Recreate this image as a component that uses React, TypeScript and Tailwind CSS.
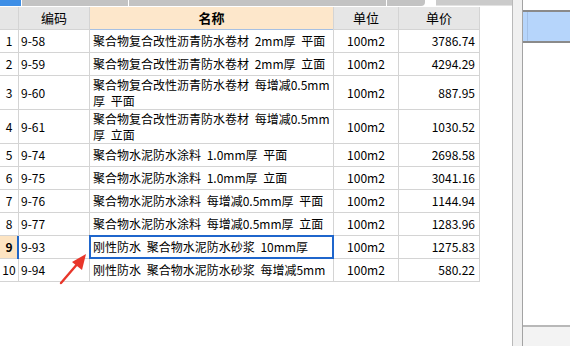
import React from "react"

type Row = { no: number; code: string; name: React.ReactNode; unit: string; price: string; tall?: boolean }

const rows: Row[] = [
  { no: 1, code: "9-58", name: "聚合物复合改性沥青防水卷材 2mm厚 平面", unit: "100m2", price: "3786.74" },
  { no: 2, code: "9-59", name: "聚合物复合改性沥青防水卷材 2mm厚 立面", unit: "100m2", price: "4294.29" },
  { no: 3, code: "9-60", name: <>聚合物复合改性沥青防水卷材 每增减0.5mm<br />厚 平面</>, unit: "100m2", price: "887.95", tall: true },
  { no: 4, code: "9-61", name: <>聚合物复合改性沥青防水卷材 每增减0.5mm<br />厚 立面</>, unit: "100m2", price: "1030.52", tall: true },
  { no: 5, code: "9-74", name: "聚合物水泥防水涂料 1.0mm厚 平面", unit: "100m2", price: "2698.58" },
  { no: 6, code: "9-75", name: "聚合物水泥防水涂料 1.0mm厚 立面", unit: "100m2", price: "3041.16" },
  { no: 7, code: "9-76", name: "聚合物水泥防水涂料 每增减0.5mm厚 平面", unit: "100m2", price: "1144.94" },
  { no: 8, code: "9-77", name: "聚合物水泥防水涂料 每增减0.5mm厚 立面", unit: "100m2", price: "1283.96" },
  { no: 9, code: "9-93", name: "刚性防水 聚合物水泥防水砂浆 10mm厚", unit: "100m2", price: "1275.83" },
  { no: 10, code: "9-94", name: "刚性防水 聚合物水泥防水砂浆 每增减5mm", unit: "100m2", price: "580.22" },
]

const cell = "relative border-r border-b border-[#d4d4d4] flex items-center"

export default function App() {
  return (
    <div className="w-[570px] h-[346px] flex bg-white overflow-hidden text-black text-[12px] leading-[16px] font-['Noto_Sans_CJK_SC','Noto_Sans',sans-serif]">
      {/* main grid panel */}
      <div className="relative w-[512px] flex flex-col">
        {/* tab strip */}
        <div className="h-[6px] flex gap-px bg-white">
          <div className="w-[21px] bg-[#3d8ee6]" />
          <div className="w-[106px] bg-[#c3c3c3]" />
          <div className="w-[257px] bg-[#c3c3c3]" />
          <div className="w-[38px] bg-[#c3c3c3] rounded-br" />
          <div className="w-[9px] bg-white" />
          <div className="flex-1 bg-[#cbcbcb] border-b border-[#e2e2e2]" />
        </div>
        <div className="h-px" />

        {/* header */}
        <div className="flex h-[23px] text-[13px]">
          <div className={`${cell} w-[19px] bg-[#e6e6e6]`} />
          <div className={`${cell} w-[71px] bg-[#e6e6e6] justify-center`}>编码</div>
          <div className={`${cell} w-[244px] bg-[#fde7cb] justify-center font-bold`}>
            名称
            <div className="absolute left-0 right-0 -bottom-px h-px bg-[#a6c0e2]" />
          </div>
          <div className={`${cell} w-[65px] bg-[#e6e6e6] justify-center`}>单位</div>
          <div className={`${cell} w-[81px] bg-[#e6e6e6] justify-center`}>单价</div>
        </div>

        {rows.map((r) => {
          const sel = r.no === 9
          return (
            <div key={r.no} className={`flex ${r.tall ? "h-[34px]" : "h-[23px]"}`}>
              <div className={`${cell} w-[19px] justify-center ${sel ? "bg-[#fde4c2] font-bold" : ""}`}>
                {r.no}
                {sel && <div className="absolute -right-px top-0 -bottom-px w-[2px] bg-[#2066c8]" />}
              </div>
              <div className={`${cell} w-[71px] pl-[2px]`}>{r.code}</div>
              <div className={`${cell} w-[244px] pl-[3px] [word-spacing:3px]`}>
                <span>{r.name}</span>
                {sel && <div className="absolute -left-px -top-px -right-px -bottom-px border-2 border-[#1f66cc]" />}
              </div>
              <div className={`${cell} w-[65px] justify-center`}>{r.unit}</div>
              <div className={`${cell} w-[81px] justify-end pr-[4px]`}>{r.price}</div>
            </div>
          )
        })}

        {/* red annotation arrow */}
        <svg className="absolute left-[58px] top-[250px]" width="32" height="36" viewBox="0 0 32 36">
          <line x1="3" y1="33" x2="21" y2="12" stroke="#e8362a" strokeWidth="2.4" strokeLinecap="round" />
          <polygon points="28,4 14,12 24,20" fill="#e8362a" />
        </svg>
      </div>

      {/* splitter */}
      <div className="w-[11px] bg-[#f0f0f0] border-l border-[#b9b9b9] border-r border-r-[#a3a3a3]" />

      {/* right panel */}
      <div className="flex-1 flex flex-col bg-white">
        <div className="h-[10px]" />
        <div className="h-[33px] bg-[#b6d5fb] border-y-2 border-[#8a8a8a] flex">
          <div className="w-[4px]" />
          <div className="w-px bg-[#a3c0e6]" />
        </div>
        <div className="flex-1" />
        <div className="h-[21px] bg-[#f3f3f3] border-t-2 border-[#b8b8b8]" />
      </div>
    </div>
  )
}
